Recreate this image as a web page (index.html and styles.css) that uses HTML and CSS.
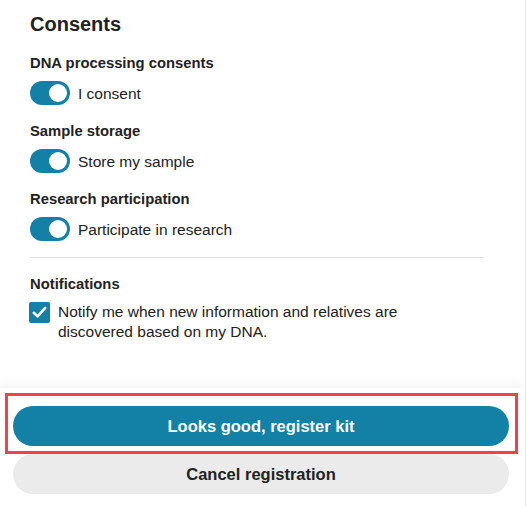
FILE: index.html
```html
<!DOCTYPE html>
<html>
<head>
<meta charset="utf-8">
<link rel="stylesheet" href="styles.css">
</head>
<body>
<div class="page">
  <main class="content">
    <h1 class="title">Consents</h1>
    <section class="group">
      <div class="group-label">DNA processing consents</div>
      <div class="toggle-row"><span class="toggle"><span class="knob"></span></span><span class="toggle-text">I consent</span></div>
    </section>
    <section class="group">
      <div class="group-label">Sample storage</div>
      <div class="toggle-row"><span class="toggle"><span class="knob"></span></span><span class="toggle-text">Store my sample</span></div>
    </section>
    <section class="group">
      <div class="group-label">Research participation</div>
      <div class="toggle-row"><span class="toggle"><span class="knob"></span></span><span class="toggle-text">Participate in research</span></div>
    </section>
    <hr class="divider">
    <section class="group">
      <div class="group-label">Notifications</div>
      <div class="check-row">
        <span class="checkbox"><svg width="15" height="13" viewBox="0 0 15 13"><path d="M1.8 6.8 L5.6 10.4 L13.2 1.9" fill="none" stroke="#fff" stroke-width="2.6" stroke-linecap="round" stroke-linejoin="round"/></svg></span>
        <span class="check-text">Notify me when new information and relatives are discovered based on my DNA.</span>
      </div>
    </section>
  </main>
  <footer class="footer">
    <div class="primary-wrap">
      <button class="btn btn-primary">Looks good, register kit</button>
      <span class="highlight"></span>
    </div>
    <button class="btn btn-secondary">Cancel registration</button>
  </footer>
</div>
</body>
</html>
```
FILE: styles.css
```css
html, body {
  margin: 0;
  padding: 0;
  background: #ffffff;
}
body {
  font-family: "Liberation Sans", Arial, sans-serif;
  color: #222222;
}
.page {
  width: 525px;
  height: 506px;
  border-right: 1px solid #ebe8e5;
  display: flex;
  flex-direction: column;
  overflow: hidden;
}
.content {
  padding: 12px 41px 0 30px;
  height: 376px;
}
.title {
  margin: 0 0 17px 0;
  font-size: 20px;
  line-height: 24px;
  font-weight: 700;
}
.group {
  margin-bottom: 16px;
}
.group-label {
  font-size: 14.8px;
  line-height: 20px;
  font-weight: 700;
  margin-bottom: 8px;
}
.toggle-row {
  display: flex;
  align-items: center;
  gap: 8px;
  height: 24px;
}
.toggle {
  width: 40px;
  height: 24px;
  border-radius: 12px;
  background: #1380a6;
  position: relative;
  flex: none;
}
.knob {
  position: absolute;
  right: 3px;
  top: 3px;
  width: 18px;
  height: 18px;
  border-radius: 50%;
  background: #ffffff;
}
.toggle-text {
  font-size: 15.5px;
  line-height: 24px;
  padding-top: 2px;
}
.divider {
  margin: 0 0 16px 0;
  border: 0;
  border-top: 1px solid #e2e2e2;
  height: 0;
}
.check-row {
  display: flex;
  align-items: flex-start;
  gap: 8px;
  margin-left: -1px;
}
.checkbox {
  width: 21px;
  height: 21px;
  border-radius: 2px;
  background: #1380a6;
  flex: none;
  display: flex;
  align-items: center;
  justify-content: center;
}
.check-text {
  font-size: 15.5px;
  line-height: 20px;
  max-width: 345px;
}
.footer {
  flex: 1;
  box-shadow: 0 -5px 10px rgba(0, 0, 0, 0.045);
  padding: 18px 16px 12px 13px;
  display: flex;
  flex-direction: column;
  gap: 8px;
  background: #ffffff;
}
.primary-wrap {
  position: relative;
}
.btn {
  display: block;
  width: 100%;
  height: 40px;
  border: 0;
  border-radius: 20px;
  font-family: "Liberation Sans", Arial, sans-serif;
  font-size: 16.5px;
  font-weight: 700;
  padding: 0;
}
.btn-primary {
  background: #1380a6;
  color: #ffffff;
}
.btn-secondary {
  background: #ebebeb;
  color: #222222;
}
.highlight {
  position: absolute;
  left: -8px;
  right: -9px;
  top: -13px;
  bottom: -8px;
  border: 3px solid #f04343;
  pointer-events: none;
}
```
